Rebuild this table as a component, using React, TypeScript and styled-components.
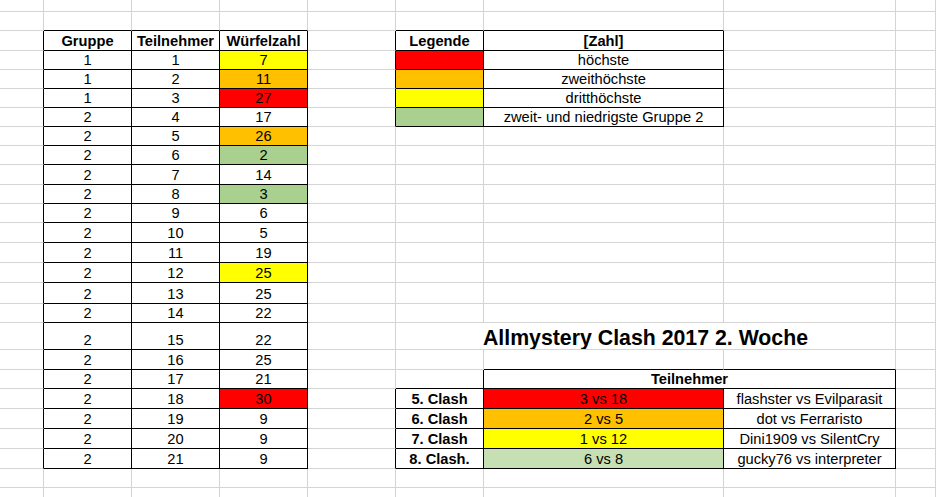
import React from 'react';
import styled, { createGlobalStyle } from 'styled-components';

const COLS = [44, 88, 88, 88, 88, 88, 240, 172];
const ROWS = [12, 19, 20, 19, 19, 19, 19, 19, 19, 20, 19, 19, 20, 20, 20, 21, 19, 27, 20, 19, 20, 20, 20, 20, 19, 10];
const NCOLS = COLS.length + 1;

const GRIDLINE = '#d4d4d4';
const INK = '#000000';
const FILL = {
  red: '#ff0000',
  orange: '#ffc000',
  yellow: '#ffff00',
  green: '#a9d08e',
  pale: '#c6e0b4',
};

type CellDef = {
  text?: string;
  bold?: boolean;
  fill?: string;
  bordered?: boolean;
  span?: number;
  title?: boolean;
};

const GlobalStyle = createGlobalStyle`
  html, body { margin: 0; padding: 0; background: #ffffff; }
  body { font-family: "Liberation Sans", Arial, sans-serif; }
`;

const Sheet = styled.div`
  display: grid;
  grid-template-columns: ${COLS.map((c) => `${c}px`).join(' ')} 1fr;
  grid-template-rows: ${ROWS.map((r) => `${r}px`).join(' ')};
  width: 936px;
  height: 497px;
  overflow: hidden;
  background: #ffffff;
  font-family: "Liberation Sans", Arial, sans-serif;
  color: #000000;
`;

const Cell = styled.div<{
  $fill?: string;
  $bold?: boolean;
  $right: boolean;
  $bottom: boolean;
  $span: number;
  $title?: boolean;
}>`
  box-sizing: border-box;
  min-width: 0;
  grid-column: span ${(p) => p.$span};
  display: flex;
  align-items: flex-end;
  justify-content: center;
  background: ${(p) => p.$fill ?? '#ffffff'};
  border-right: 1px solid ${(p) => (p.$right ? INK : GRIDLINE)};
  border-bottom: 1px solid ${(p) => (p.$bottom ? INK : GRIDLINE)};
  font-weight: ${(p) => (p.$bold ? 700 : 400)};
  font-size: ${(p) => (p.$title ? '21.3px' : '14.67px')};
  line-height: ${(p) => (p.$title ? 1 : 1.15)};
  white-space: nowrap;
  overflow: hidden;
`;

const participants: [number, number, number, string?][] = [
  [1, 1, 7, FILL.yellow],
  [1, 2, 11, FILL.orange],
  [1, 3, 27, FILL.red],
  [2, 4, 17],
  [2, 5, 26, FILL.orange],
  [2, 6, 2, FILL.green],
  [2, 7, 14],
  [2, 8, 3, FILL.green],
  [2, 9, 6],
  [2, 10, 5],
  [2, 11, 19],
  [2, 12, 25, FILL.yellow],
  [2, 13, 25],
  [2, 14, 22],
  [2, 15, 22],
  [2, 16, 25],
  [2, 17, 21],
  [2, 18, 30, FILL.red],
  [2, 19, 9],
  [2, 20, 9],
  [2, 21, 9],
];

const legend: [string, string][] = [
  [FILL.red, 'höchste'],
  [FILL.orange, 'zweithöchste'],
  [FILL.yellow, 'dritthöchste'],
  [FILL.green, 'zweit- und niedrigste Gruppe 2'],
];

const clashes: [string, string, string, string][] = [
  ['5. Clash', '3 vs 18', 'flashster vs Evilparasit', FILL.red],
  ['6. Clash', '2 vs 5', 'dot vs Ferraristo', FILL.orange],
  ['7. Clash', '1 vs 12', 'Dini1909 vs SilentCry', FILL.yellow],
  ['8. Clash.', '6 vs 8', 'gucky76 vs interpreter', FILL.pale],
];

function buildSheet() {
  const cells: (CellDef | null)[][] = ROWS.map(() => Array.from({ length: NCOLS }, () => ({} as CellDef)));
  const owner: [number, number][][] = ROWS.map((_, r) => Array.from({ length: NCOLS }, (_, c) => [r, c] as [number, number]));

  const put = (r: number, c: number, def: CellDef) => {
    cells[r][c] = def;
    const span = def.span ?? 1;
    for (let k = 1; k < span; k++) {
      cells[r][c + k] = null;
      owner[r][c + k] = [r, c];
    }
  };

  // Main table
  put(2, 1, { text: 'Gruppe', bold: true, bordered: true });
  put(2, 2, { text: 'Teilnehmer', bold: true, bordered: true });
  put(2, 3, { text: 'Würfelzahl', bold: true, bordered: true });
  participants.forEach(([g, n, v, fill], i) => {
    const r = 3 + i;
    put(r, 1, { text: String(g), bordered: true });
    put(r, 2, { text: String(n), bordered: true });
    put(r, 3, { text: String(v), bordered: true, fill });
  });

  // Legend
  put(2, 5, { text: 'Legende', bold: true, bordered: true });
  put(2, 6, { text: '[Zahl]', bold: true, bordered: true });
  legend.forEach(([fill, text], i) => {
    put(3 + i, 5, { fill, bordered: true });
    put(3 + i, 6, { text, bordered: true });
  });

  // Title + clash table
  put(17, 5, { text: 'Allmystery Clash 2017 2. Woche', bold: true, title: true, span: 3 });
  put(19, 6, { text: 'Teilnehmer', bold: true, bordered: true, span: 2 });
  clashes.forEach(([label, pair, names, fill], i) => {
    const r = 20 + i;
    put(r, 5, { text: label, bold: true, bordered: true });
    put(r, 6, { text: pair, bordered: true, fill });
    put(r, 7, { text: names, bordered: true });
  });

  const isBordered = (r: number, c: number) => {
    if (r >= ROWS.length || c >= NCOLS) return false;
    const [or, oc] = owner[r][c];
    return !!cells[or][oc]?.bordered;
  };

  const out: { key: string; def: CellDef; right: boolean; bottom: boolean }[] = [];
  cells.forEach((row, r) =>
    row.forEach((def, c) => {
      if (!def) return;
      const span = def.span ?? 1;
      const lastCol = c + span - 1;
      const right = isBordered(r, c) || isBordered(r, lastCol + 1);
      let bottom = isBordered(r, c);
      for (let k = c; k <= lastCol; k++) bottom = bottom || isBordered(r + 1, k);
      out.push({ key: `${r}-${c}`, def, right, bottom });
    })
  );
  return out;
}

const sheetCells = buildSheet();

export default function App() {
  return (
    <>
      <GlobalStyle />
      <Sheet>
        {sheetCells.map(({ key, def, right, bottom }) => (
          <Cell
            key={key}
            $fill={def.fill}
            $bold={def.bold}
            $title={def.title}
            $span={def.span ?? 1}
            $right={right}
            $bottom={bottom}
          >
            {def.text}
          </Cell>
        ))}
      </Sheet>
    </>
  );
}
